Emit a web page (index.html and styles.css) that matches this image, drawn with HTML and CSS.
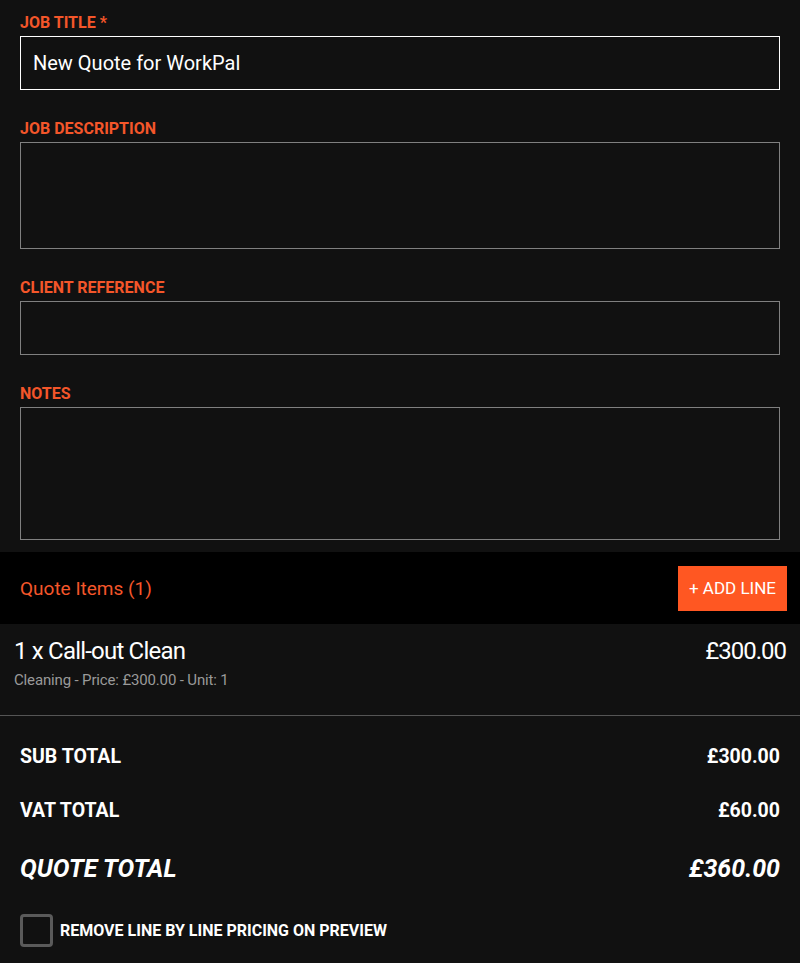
FILE: index.html
```html
<!DOCTYPE html>
<html lang="en">
<head>
    <meta charset="UTF-8">
    <meta name="viewport" content="width=device-width, initial-scale=1.0">
    <title>New Quote</title>
    <link rel="stylesheet" href="styles.css">
</head>
<body>
    <main>
        <section class="quote-form">
            <div class="field">
                <label for="jobTitle">JOB TITLE *</label>
                <input type="text" id="jobTitle" class="input input-active" value="New Quote for WorkPal">
            </div>
            <div class="field">
                <label for="jobDescription">JOB DESCRIPTION</label>
                <textarea id="jobDescription" class="input textarea-desc"></textarea>
            </div>
            <div class="field">
                <label for="clientRef">CLIENT REFERENCE</label>
                <input type="text" id="clientRef" class="input">
            </div>
            <div class="field">
                <label for="notes">NOTES</label>
                <textarea id="notes" class="input textarea-notes"></textarea>
            </div>
        </section>

        <section class="quote-items">
            <div class="items-header">
                <h2>Quote Items (1)</h2>
                <button type="button" class="add-line">+ ADD LINE</button>
            </div>
            <div class="item-row">
                <div class="item-info">
                    <div class="item-name">1 x Call-out Clean</div>
                    <div class="item-meta">Cleaning - Price: £300.00 - Unit: 1</div>
                </div>
                <div class="item-price">£300.00</div>
            </div>
        </section>

        <section class="totals">
            <div class="total-row">
                <span>SUB TOTAL</span>
                <span>£300.00</span>
            </div>
            <div class="total-row">
                <span>VAT TOTAL</span>
                <span>£60.00</span>
            </div>
            <div class="total-row grand">
                <span>QUOTE TOTAL</span>
                <span>£360.00</span>
            </div>
            <label class="check">
                <input type="checkbox">
                <span class="box"></span>
                <span>REMOVE LINE BY LINE PRICING ON PREVIEW</span>
            </label>
        </section>
    </main>
</body>
</html>
```

FILE: styles.css
```css
body {
    font-family: Roboto, "Noto Sans", sans-serif;
    margin: 0;
    padding: 0;
    background-color: #111111;
    color: #ffffff;
}
.quote-form {
    padding: 12px 20px 12px;
    display: flex;
    flex-direction: column;
    gap: 28px;
}
.field {
    display: flex;
    flex-direction: column;
}
.field label {
    color: #f4562a;
    font-size: 16px;
    font-weight: 700;
    line-height: 20px;
    padding-top: 1px;
    margin-bottom: 3px;
}
.input {
    box-sizing: border-box;
    width: 100%;
    height: 54px;
    margin: 0;
    padding: 0 12px;
    background-color: #111111;
    border: 1px solid #808080;
    color: #ffffff;
    font-family: Roboto, sans-serif;
    font-size: 20px;
    outline: none;
}
.input-active {
    border-color: #ffffff;
}
textarea.input {
    resize: none;
    padding: 12px;
}
.textarea-desc {
    height: 107px;
}
.textarea-notes {
    height: 133px;
}
.items-header {
    background-color: #000000;
    height: 72px;
    display: flex;
    align-items: center;
    justify-content: space-between;
    padding: 0 13px 0 20px;
}
.items-header h2 {
    margin: 0;
    color: #f4562a;
    font-size: 19px;
    font-weight: 400;
}
.add-line {
    background-color: #ff5722;
    color: #ffffff;
    border: none;
    height: 45px;
    padding: 0 11px;
    font-family: Roboto, sans-serif;
    font-size: 17px;
}
.item-row {
    display: flex;
    justify-content: space-between;
    padding: 12px 14px 0;
    height: 79px;
    border-bottom: 1px solid #555555;
}
.item-name {
    font-size: 24px;
    letter-spacing: -0.8px;
    line-height: 30px;
}
.item-meta {
    color: #9a9a9a;
    font-size: 15px;
    letter-spacing: -0.15px;
    margin-top: 5px;
}
.item-price {
    font-size: 24px;
    letter-spacing: -1px;
    line-height: 30px;
}
.totals {
    padding: 13px 20px 0;
}
.total-row {
    display: flex;
    justify-content: space-between;
    align-items: center;
    font-size: 19.5px;
    font-weight: 700;
    height: 54px;
}
.total-row.grand {
    font-size: 25px;
    font-style: italic;
    height: 62px;
}
.check {
    display: flex;
    align-items: center;
    gap: 7px;
    margin-top: 15px;
    font-size: 16px;
    font-weight: 700;
}
.check input {
    display: none;
}
.check .box {
    box-sizing: border-box;
    width: 33px;
    height: 33px;
    border: 3px solid #5a5a5a;
    border-radius: 4px;
}
```
